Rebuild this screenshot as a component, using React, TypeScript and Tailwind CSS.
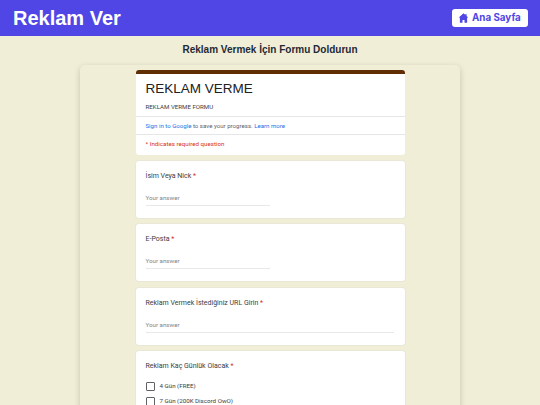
const sans = 'font-["Liberation_Sans",sans-serif]';
const roboto = 'font-["Roboto",sans-serif]';

function Required() {
  return <span className="text-[#d93025]"> *</span>;
}

function HomeIcon() {
  return (
    <svg viewBox="0 0 16 18" className="w-[9px] h-[10px]" fill="currentColor">
      <path fillRule="evenodd" d="M8 0.5 L11.5 3.6 V1.8 H13.5 V5.4 L16 7.8 L14.5 9 V17.5 H1.5 V9 L0 7.8 Z M6.2 17.5 H9.8 V12.5 H6.2 Z" />
    </svg>
  );
}

function TextQuestion({ label, wide }: { label: string; wide?: boolean }) {
  return (
    <section className="bg-white rounded-[3px] h-[57px] px-[10px] pt-[11px] shadow-[0_0_0_1px_#e9e8d6]">
      <div className="text-[7px] leading-[9px] text-[#3c4043]">
        {label}
        <Required />
      </div>
      <div className={`mt-[13px] h-[12px] border-b border-[#e8e8e8] text-[6.2px] leading-[9px] text-[#80868b] ${wide ? 'w-[248px]' : 'w-[124px]'}`}>
        Your answer
      </div>
    </section>
  );
}

function CheckRow({ label }: { label: string }) {
  return (
    <div className="flex items-center gap-[5px] h-[15.3px]">
      <span className="w-[9px] h-[9px] border border-[#5f6368] rounded-[1px]" />
      <span className="text-[6.2px] text-[#3c4043]">{label}</span>
    </div>
  );
}

export default function App() {
  return (
    <div className={`h-[405px] overflow-hidden bg-[#f0eed6] ${sans}`}>
      <header className="h-9 bg-[#4f46e5] flex items-center justify-between pl-[13px] pr-[12px]">
        <h1 className="text-[20px] font-bold text-white leading-none">Reklam Ver</h1>
        <a className="flex items-center gap-[4px] h-[18px] w-[76px] pl-[7px] bg-white rounded-[3px] text-[#4f46e5] text-[9.8px] font-bold font-['Inter',sans-serif]">
          <HomeIcon />
          Ana Sayfa
        </a>
      </header>

      <h2 className="mt-[7px] text-center text-[10px] leading-[14px] font-bold text-[#1f2937]">
        Reklam Vermek İçin Formu Doldurun
      </h2>

      <div className="mt-[8px] mx-[80px] h-[400px] rounded-[5px] bg-[#f0eed6] shadow-[0_2px_6px_rgba(0,0,0,0.18)] pt-[5px] px-[55.5px]">
        <div className={`flex flex-col gap-[6.3px] ${roboto}`}>
          <section className="bg-white rounded-[3px] border-t-[4px] border-[#5f2e05] h-[84.7px]">
            <div className="px-[10px] pt-[6px] h-[43px] border-b border-[#e6e6e6]">
              <div className={`text-[13.5px] leading-[17px] text-[#202124] ${sans}`}>REKLAM VERME</div>
              <div className="mt-[6px] text-[6.15px] leading-[9px] text-[#3c4043]">REKLAM VERME FORMU</div>
            </div>
            <div className="px-[10px] h-[18px] flex items-center border-b border-[#e6e6e6] text-[6.1px] text-[#5f6368] whitespace-pre">
              <span className="text-[#1a73e8]">Sign in to Google</span> to save your progress. <span className="text-[#1a73e8]">Learn more</span>
            </div>
            <div className="px-[10px] h-[19px] flex items-center text-[6.2px] text-[#d93025]">* Indicates required question</div>
          </section>

          <TextQuestion label="İsim Veya Nick" />
          <TextQuestion label="E-Posta" />
          <TextQuestion label="Reklam Vermek İstediğiniz URL Girin" wide />

          <section className="bg-white rounded-[3px] h-[80px] px-[10px] pt-[11px] shadow-[0_0_0_1px_#e9e8d6]">
            <div className="text-[7px] leading-[9px] text-[#3c4043]">
              Reklam Kaç Günlük Olacak
              <Required />
            </div>
            <div className="mt-[8px]">
              <CheckRow label="4 Gün (FREE)" />
              <CheckRow label="7 Gün (200K Discord OwO)" />
            </div>
          </section>
        </div>
      </div>
    </div>
  );
}
